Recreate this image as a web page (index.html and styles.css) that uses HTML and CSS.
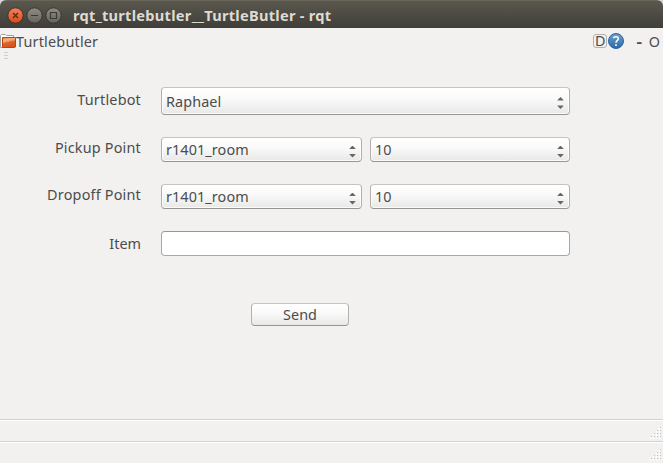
FILE: index.html
```
<!DOCTYPE html>
<html lang="en">
<head>
<meta charset="utf-8">
<title>rqt_turtlebutler__TurtleButler - rqt</title>
<link rel="stylesheet" href="styles.css">
</head>
<body>
<div class="window">
  <header class="titlebar">
    <svg class="controls" width="56" height="18" viewBox="0 0 56 18">
      <defs>
        <linearGradient id="close" x2="0" y2="1"><stop stop-color="#f5825c"/><stop offset="1" stop-color="#df4a16"/></linearGradient>
        <linearGradient id="gray" x2="0" y2="1"><stop stop-color="#8e8c83"/><stop offset="1" stop-color="#66645d"/></linearGradient>
      </defs>
      <circle cx="9.5" cy="8.5" r="7.7" fill="url(#close)" stroke="#38362f"/>
      <path d="M7 6l5 5M12 6l-5 5" stroke="#53251a" stroke-width="1.2"/>
      <circle cx="28.5" cy="8.5" r="7.7" fill="url(#gray)" stroke="#38362f"/>
      <path d="M25 8.5h7" stroke="#3a3932" stroke-width="1.2"/>
      <circle cx="47.5" cy="8.5" r="7.7" fill="url(#gray)" stroke="#38362f"/>
      <path d="M44.5 5.5h6v6h-6z" fill="none" stroke="#3a3932" stroke-width="1.2"/>
    </svg>
    <h1 class="title">rqt_turtlebutler__TurtleButler - rqt</h1>
  </header>
  <div class="dockbar">
    <svg class="folder" width="16" height="16" viewBox="0 0 16 16">
      <defs><linearGradient id="folder" x2=".3" y2="1"><stop stop-color="#e9803f"/><stop offset=".3" stop-color="#f4b183"/><stop offset=".5" stop-color="#e8935c"/><stop offset=".55" stop-color="#df6528"/><stop offset="1" stop-color="#d9541a"/></linearGradient></defs>
      <path d="M.5 13.5V1.5L1.5.5h4l1 1h7v12z" fill="#fff" stroke="#a3a19e"/>
      <path d="M2.5 3.5h13v9.5l-1 .5h-12z" fill="url(#folder)" stroke="#bd4310"/>
    </svg>
    <span class="dock-name">Turtlebutler</span>
    <span class="d-button">D</span>
    <svg class="help" width="16" height="16" viewBox="0 0 16 16">
      <defs><linearGradient id="help" x2="0" y2="1"><stop stop-color="#6da0d0"/><stop offset="1" stop-color="#2c68a6"/></linearGradient></defs>
      <circle cx="8" cy="8" r="7.5" fill="url(#help)" stroke="#2b649e"/>
      <path d="M5.4 5.2C6 3.3 10.3 3 10.3 5.7 10.3 7.5 8 7.6 8 9.7M8 11.2v1.7" fill="none" stroke="#fff" stroke-width="1.6"/>
    </svg>
    <span class="dash">-</span>
    <span class="float">O</span>
  </div>
  <div class="handle"><i></i><i></i><i></i></div>
  <main class="form">
    <label class="label first">Turtlebot</label>
    <div class="combo wide"><span>Raphael</span><i class="arrows"></i></div>
    <label class="label">Pickup Point</label>
    <div class="combo"><span>r1401_room</span><i class="arrows"></i></div>
    <div class="combo"><span>10</span><i class="arrows"></i></div>
    <label class="label">Dropoff Point</label>
    <div class="combo"><span>r1401_room</span><i class="arrows"></i></div>
    <div class="combo"><span>10</span><i class="arrows"></i></div>
    <label class="label item">Item</label>
    <input class="entry wide" type="text" aria-label="Item">
  </main>
  <button class="send">Send</button>
  <footer class="status">
    <div class="statusbar"><svg width="12" height="12"><use href="#grip"/></svg></div>
    <div class="statusbar"><svg width="12" height="12"><defs><g id="grip"><path d="M10 1h1M7 4h1m2 0h1M4 7h1m2 0h1m2 0h1M1 10h1m2 0h1m2 0h1m2 0h1" transform="translate(-1 1)" stroke="#fff" stroke-width="2"/><path d="M10 .5h1M7 3.5h1m2 0h1M4 6.5h1m2 0h1m2 0h1M1 9.5h1m2 0h1m2 0h1m2 0h1" stroke="#c4c2bf"/></g></defs><use href="#grip"/></svg></div>
  </footer>
</div>
</body>
</html>
```
FILE: styles.css
```
* { box-sizing: border-box; }
body {
  margin: 0;
  background: #d5d5d5;
  color: #4c4c4c;
  font: 14.4px/20px "Noto Sans", "Open Sans", sans-serif;
}
.window {
  display: flex;
  flex-direction: column;
  width: 663px;
  height: 463px;
  overflow: hidden;
  background: #f2f1f0;
  border-radius: 6px 6px 0 0;
}
.titlebar {
  display: flex;
  align-items: center;
  flex: none;
  height: 28px;
  padding-left: 6px;
  background: linear-gradient(#5a574d, #3f3e39);
  border-top: 1px solid #696659;
}
.controls { margin-top: 2px; }
.title {
  margin: 1px 0 0 11px;
  color: #dfdbd2;
  font-size: 14.6px;
  font-weight: 700;
  letter-spacing: .28px;
  white-space: nowrap;
}
.dockbar {
  display: flex;
  align-items: center;
  height: 24px;
  padding: 3px 2px 0 0;
}
.folder { margin-top: 1px; }
.dock-name { flex: 1; letter-spacing: .2px; }
.d-button {
  width: 14px;
  height: 14px;
  margin-top: -1px;
  border: 1px solid #b4b1ad;
  border-radius: 3px;
  line-height: 12px;
  text-align: center;
}
.help { margin: -2px 0 0 1px; }
.dash { margin-left: 13px; font-weight: 700; transform: scaleX(1.2); }
.float { margin: 0 1px 0 7px; }
.handle {
  display: flex;
  flex-direction: column;
  gap: 2px;
  height: 10px;
  padding: 0 0 0 4px;
}
.handle i { height: 1px; width: 4px; background: #d0cecc; }
.form {
  display: grid;
  grid-template-columns: 153px 201px 200px;
  grid-template-rows: 28px 25px 25px 25px;
  column-gap: 8px;
  row-gap: 22px;
  margin-top: 25px;
}
.label {
  padding-right: 12px;
  letter-spacing: .2px;
  line-height: 22px;
  text-align: right;
}
.label.first { line-height: 26px; }
.label.item { letter-spacing: 0; line-height: 26px; }
.wide { grid-column: span 2; }
.combo {
  display: flex;
  align-items: center;
  justify-content: space-between;
  padding: 0 5px 0 4px;
  border: 1px solid #b2afac;
  border-top-color: #c6c4c1;
  border-bottom-color: #989591;
  border-radius: 4px;
  background: linear-gradient(#fff, #fafafa 40%, #e9e8e7);
  box-shadow: inset 0 0 0 1px #fffc;
}
.combo span { padding-top: 1px; letter-spacing: .1px; }
.arrows {
  width: 7px;
  height: 12px;
  margin-top: 4px;
  background: #666;
  clip-path: polygon(50% 0, 92% 25%, 92% 30%, 8% 30%, 8% 25%, 50% 0, 50% 100%, 8% 75%, 8% 70%, 92% 70%, 92% 75%, 50% 100%);
}
.entry {
  width: 100%;
  padding: 0 5px;
  border: 1px solid #aaa7a3;
  border-top-color: #999692;
  border-radius: 4px;
  background: #fff;
  font: inherit;
}
.send {
  width: 98px;
  height: 23px;
  margin: 47px 0 0 251px;
  padding: 0;
  border: 1px solid #b2afac;
  border-top-color: #c6c4c1;
  border-bottom-color: #989591;
  border-radius: 4px;
  background: linear-gradient(#fff, #fafafa 40%, #e9e8e7);
  color: inherit;
  font: inherit;
  line-height: 21px;
}
.status { margin-top: auto; }
.statusbar {
  display: flex;
  align-items: flex-end;
  justify-content: flex-end;
  height: 22px;
  padding: 0 1px 2px 0;
  border-top: 1px solid #d3d1cf;
  box-shadow: inset 0 1px #fff;
}
```
